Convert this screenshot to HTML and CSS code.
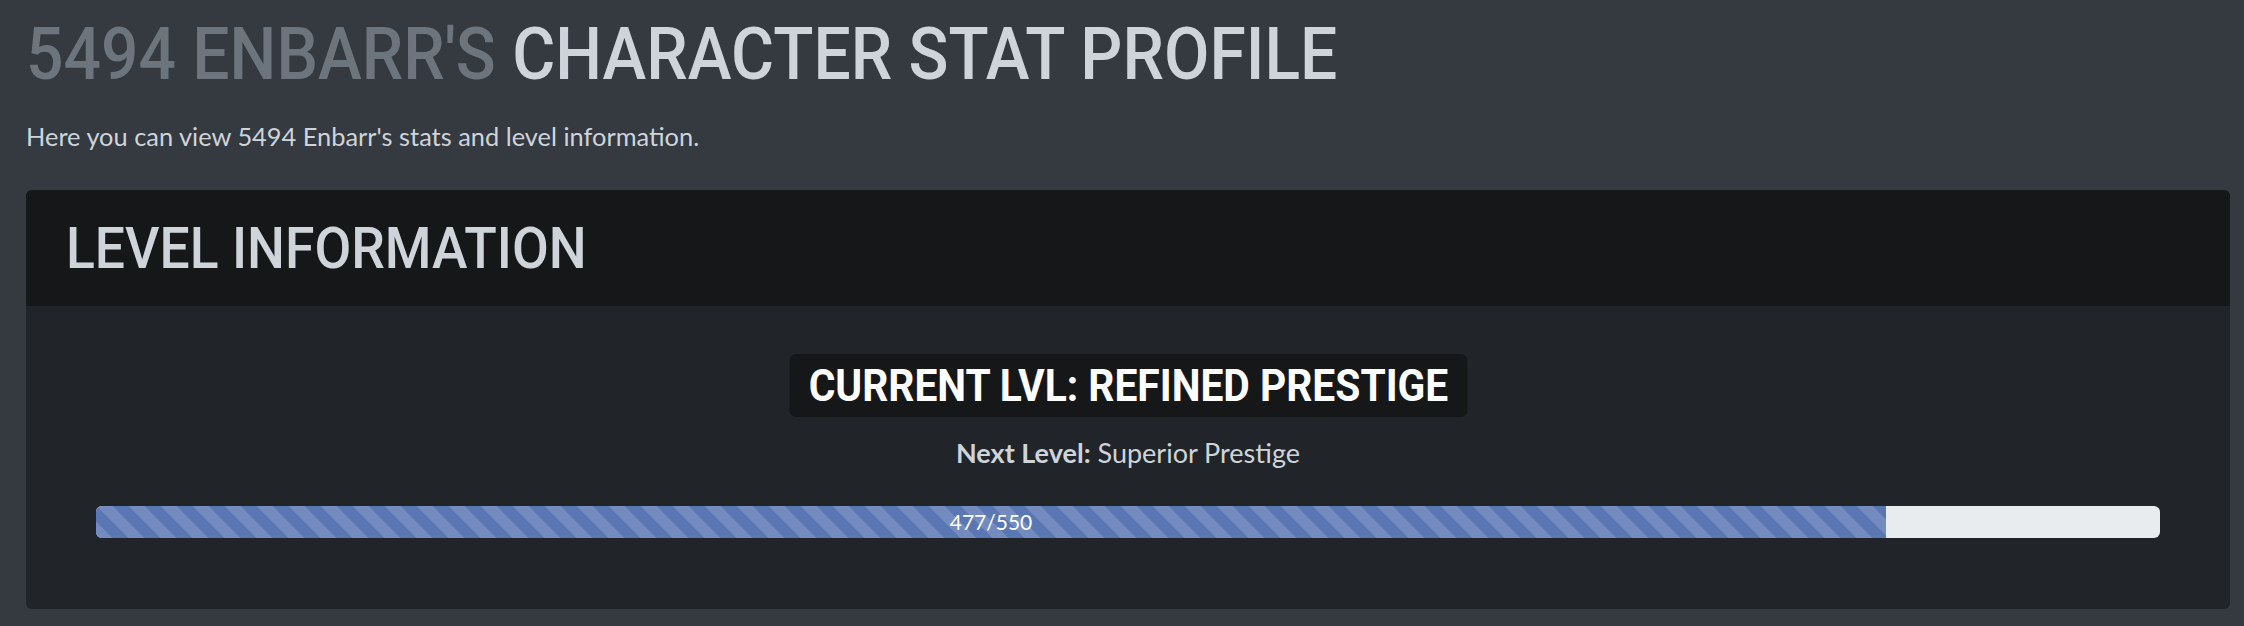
FILE: index.html
```html
<!DOCTYPE html>
<html lang="en">
<head>
<meta charset="utf-8">
<title>5494 Enbarr's Character Stat Profile</title>
<link rel="stylesheet" href="styles.css">
</head>
<body>
<div class="page">
  <h1 class="title"><span class="cond"><span class="muted">5494 ENBARR'S</span> CHARACTER STAT PROFILE</span></h1>
  <p class="lead">Here you can view 5494 Enbarr's stats and level information.</p>
  <section class="card">
    <header class="card-header">
      <h2 class="card-title"><span class="cond cond-sm">LEVEL INFORMATION</span></h2>
    </header>
    <div class="card-body">
      <div class="badge-row">
        <div class="badge"><span class="badge-text">CURRENT LVL: REFINED PRESTIGE</span></div>
      </div>
      <p class="next"><strong>Next Level:</strong> Superior Prestige</p>
      <div class="progress">
        <div class="bar" style="width: 86.727%">477/550</div>
      </div>
    </div>
  </section>
</div>
</body>
</html>
```
FILE: styles.css
```css
html, body {
  margin: 0;
  padding: 0;
}
body {
  background: #343a40;
  font-family: Lato, "Noto Sans", sans-serif;
  color: #ced4da;
}
.page {
  padding: 0 14px 0 26px;
}
.title {
  margin: 12px 0 0;
  font-family: Roboto, sans-serif;
  font-size: 72px;
  font-weight: 500;
  line-height: 86px;
  height: 86px;
  color: #ced4da;
  white-space: nowrap;
}
.cond {
  display: inline-block;
  transform: scaleX(0.916);
  transform-origin: 0 50%;
}
.cond-sm {
  transform: scaleX(0.928);
}
.muted {
  color: #6c757d;
}
.lead {
  margin: 19px 0 0;
  font-size: 25.4px;
  line-height: 38.4px;
  color: #ced4da;
}
.card {
  margin-top: 35px;
  background: #212529;
  border-radius: 6px;
  overflow: hidden;
}
.card-header {
  height: 116px;
  background: #161719;
  padding-left: 40px;
  display: flex;
  align-items: center;
}
.card-title {
  margin: 0;
  font-family: Roboto, sans-serif;
  font-size: 57.6px;
  font-weight: 500;
  line-height: 1;
  color: #ced4da;
  white-space: nowrap;
}
.card-body {
  padding: 48px 70px 71px;
}
.badge-row {
  display: flex;
  justify-content: center;
}
.badge {
  background: #161719;
  border-radius: 7px;
  padding: 4.5px 21px;
  transform: scaleX(0.91);
  transform-origin: 50% 50%;
}
.badge-text {
  display: block;
  font-family: Roboto, sans-serif;
  font-weight: 700;
  font-size: 44.8px;
  line-height: 54px;
  color: #ffffff;
  white-space: nowrap;
}
.next {
  margin: 17px 0 0;
  text-align: center;
  font-size: 27px;
  line-height: 38.4px;
  color: #ced4da;
}
.next strong {
  font-weight: 700;
}
.progress {
  margin-top: 33px;
  height: 32px;
  background: #e9ecef;
  border-radius: 6px;
  overflow: hidden;
  display: flex;
}
.bar {
  background-color: #5a77b4;
  background-image: linear-gradient(45deg, rgba(255,255,255,.15) 25%, transparent 25%, transparent 50%, rgba(255,255,255,.15) 50%, rgba(255,255,255,.15) 75%, transparent 75%, transparent);
  background-size: 32px 32px;
  color: #ffffff;
  font-size: 21px;
  display: flex;
  align-items: center;
  justify-content: center;
  white-space: nowrap;
}
```
